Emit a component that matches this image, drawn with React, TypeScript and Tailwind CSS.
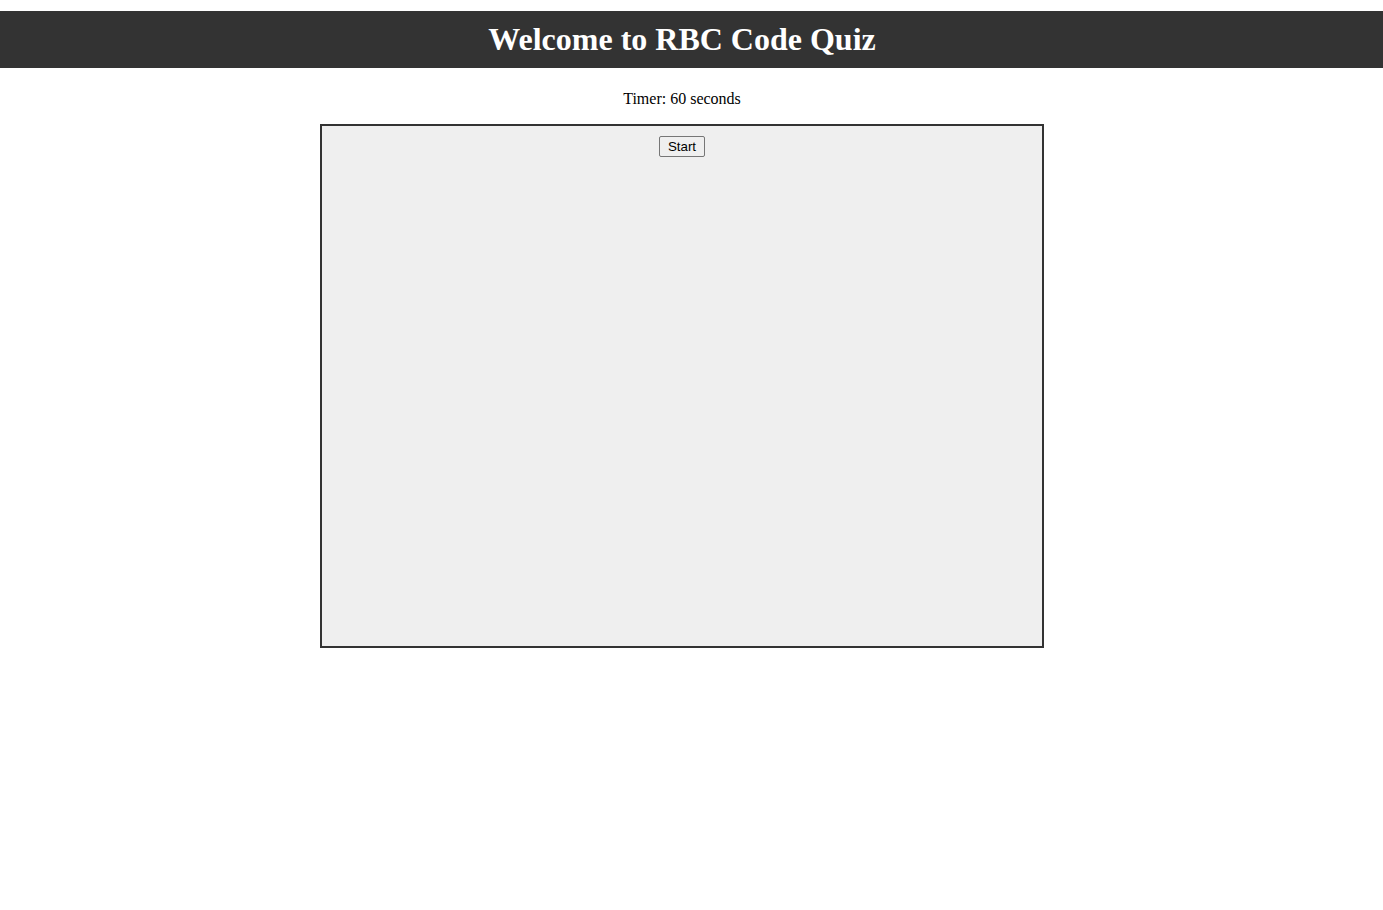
export default function App() {
  return (
    <div className="min-h-[910px] bg-white font-['Liberation_Serif',serif] text-black">
      <header className="mt-[11px] h-[57px] bg-[#333333]">
        <h1 className="w-[1364px] text-center text-[32px] font-bold leading-[57px] text-white">
          Welcome to RBC Code Quiz
        </h1>
      </header>
      <main className="flex w-[1364px] flex-col items-center">
        <p className="mt-[21px] h-[19px] text-base leading-[19px]">Timer: 60 seconds</p>
        <div className="mt-[16px] flex h-[524px] w-[724px] flex-col items-center border-2 border-[#333333] bg-[#efefef] pt-[10px]">
          <button className="h-[21px] rounded-[2px] border border-[#767676] bg-[#efefef] px-[8px] font-['Liberation_Sans',Arial,sans-serif] text-[13.33px] leading-[15px] text-black">
            Start
          </button>
        </div>
      </main>
    </div>
  );
}
